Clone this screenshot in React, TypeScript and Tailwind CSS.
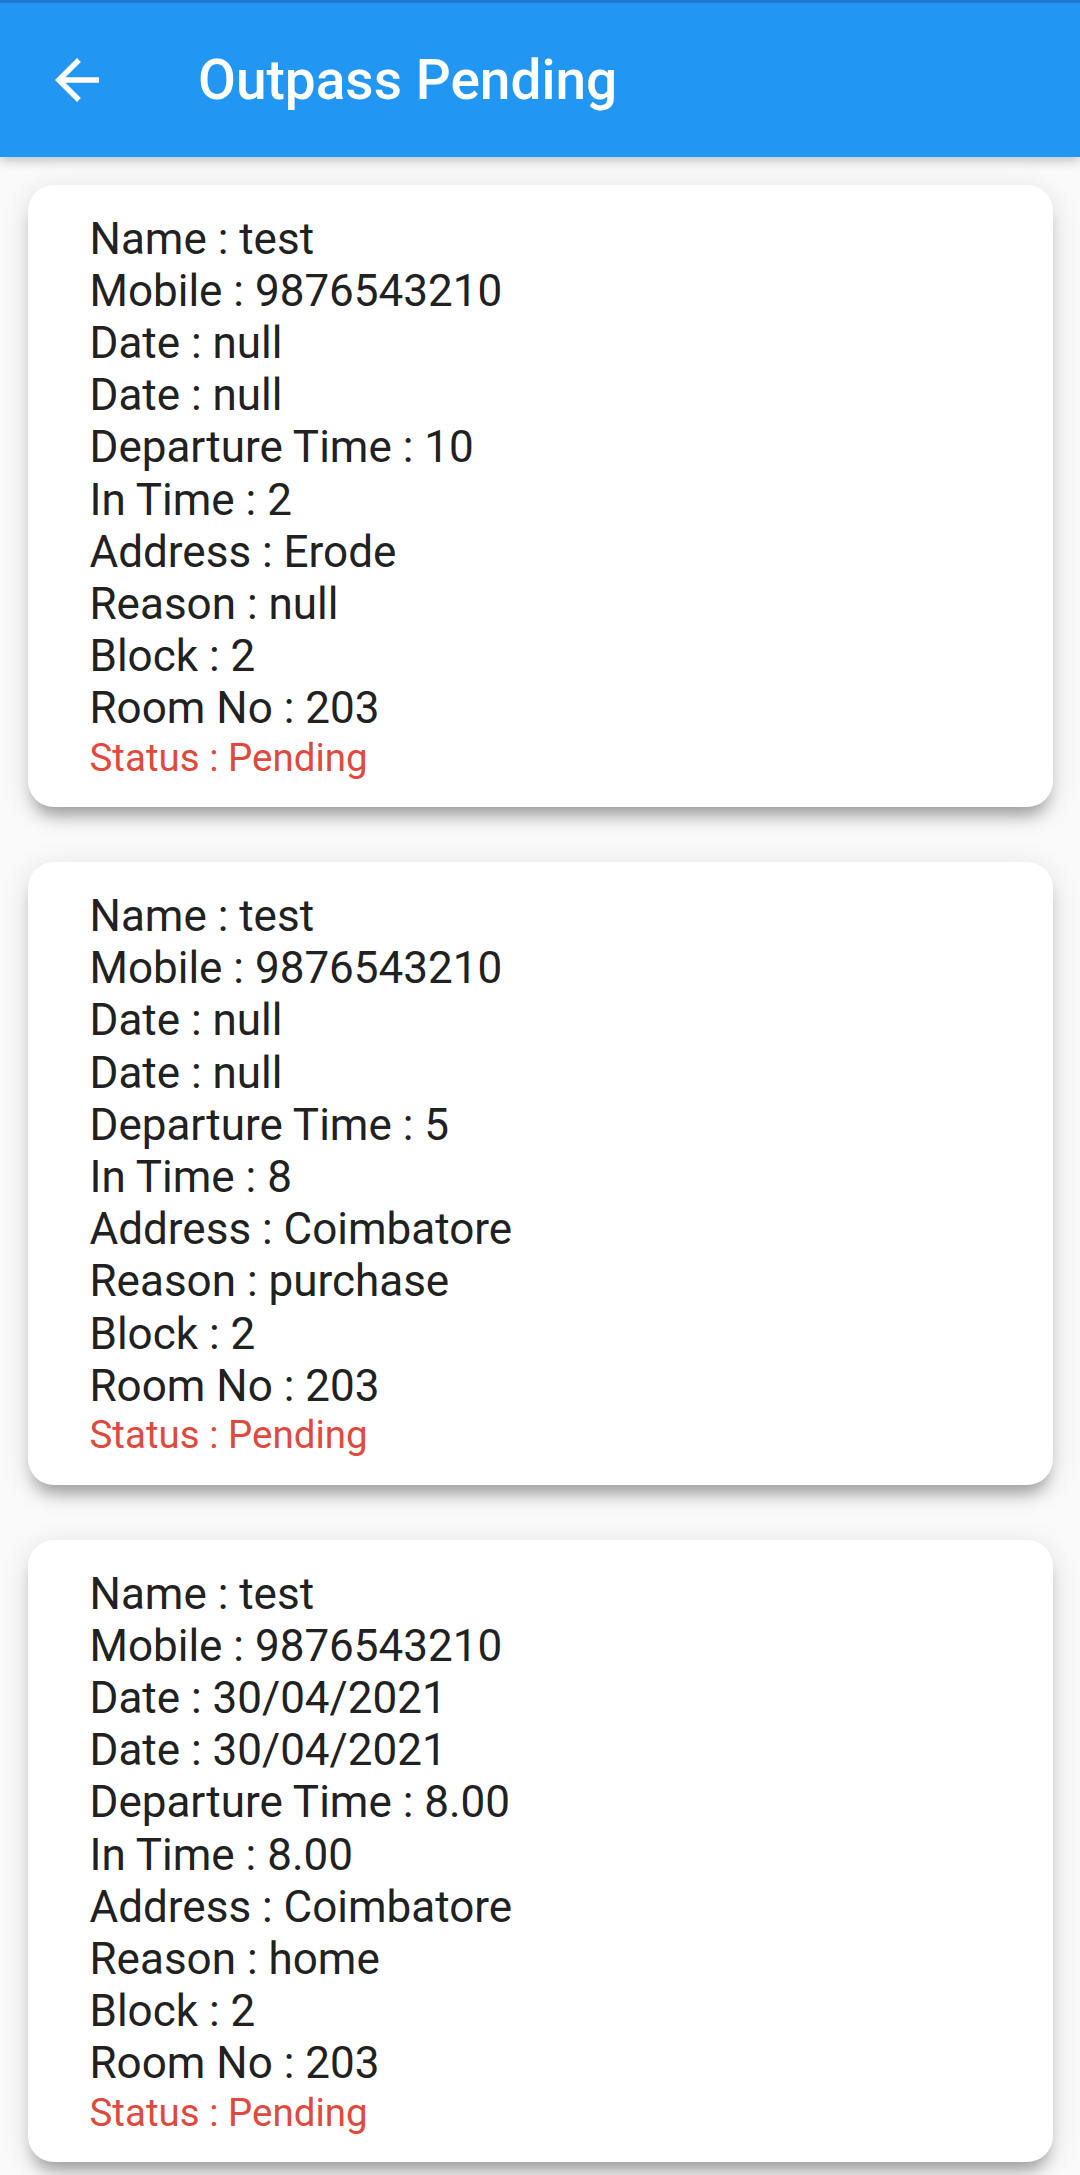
import React from 'react'

type Outpass = {
  name: string
  mobile: string
  date: string
  returnDate: string
  departure: string
  inTime: string
  address: string
  reason: string
  block: string
  room: string
  status: string
}

const outpasses: Outpass[] = [
  {
    name: 'test',
    mobile: '9876543210',
    date: 'null',
    returnDate: 'null',
    departure: '10',
    inTime: '2',
    address: 'Erode',
    reason: 'null',
    block: '2',
    room: '203',
    status: 'Pending',
  },
  {
    name: 'test',
    mobile: '9876543210',
    date: 'null',
    returnDate: 'null',
    departure: '5',
    inTime: '8',
    address: 'Coimbatore',
    reason: 'purchase',
    block: '2',
    room: '203',
    status: 'Pending',
  },
  {
    name: 'test',
    mobile: '9876543210',
    date: '30/04/2021',
    returnDate: '30/04/2021',
    departure: '8.00',
    inTime: '8.00',
    address: 'Coimbatore',
    reason: 'home',
    block: '2',
    room: '203',
    status: 'Pending',
  },
]

const BackArrow = (): JSX.Element => (
  <svg viewBox="0 0 24 24" className="w-[66px] h-[66px]" fill="#ffffff">
    <path d="M20 11H7.83l5.59-5.59L12 4l-8 8 8 8 1.41-1.41L7.83 13H20v-2z" />
  </svg>
)

const OutpassCard = ({ item }: { item: Outpass }): JSX.Element => {
  const rows = [
    `Name : ${item.name}`,
    `Mobile : ${item.mobile}`,
    `Date : ${item.date}`,
    `Date : ${item.returnDate}`,
    `Departure Time : ${item.departure}`,
    `In Time : ${item.inTime}`,
    `Address : ${item.address}`,
    `Reason : ${item.reason}`,
    `Block : ${item.block}`,
    `Room No : ${item.room}`,
  ]
  return (
    <div className="bg-white rounded-[26px] pl-[62px] pr-6 pt-[28px] pb-[27.5px] shadow-[0_14px_16px_-6px_rgba(0,0,0,0.32),0_6px_28px_2px_rgba(0,0,0,0.1)]">
      {rows.map((row, i) => (
        <div key={i} className="text-[44px] leading-[52.2px] text-[#212121]">
          {row}
        </div>
      ))}
      <div className="text-[38.5px] leading-[45px] text-[#DE4A3E]">Status : {item.status}</div>
    </div>
  )
}

export default function App(): JSX.Element {
  return (
    <div
      className="w-[1080px] h-[2175px] overflow-hidden bg-[#FAFAFA]"
      style={{ fontFamily: 'Roboto, "Noto Sans", sans-serif' }}
    >
      <div className="relative z-10 bg-[#2196F3] shadow-[0_4px_10px_rgba(0,0,0,0.22)]">
        <div className="h-[3px] bg-[#1C78D0]" />
        <div className="h-[154px] flex items-center">
          <div className="w-[154px] flex justify-center">
            <BackArrow />
          </div>
          <div className="ml-[44px] text-[55px] font-medium text-white leading-none">Outpass Pending</div>
        </div>
      </div>
      <div className="flex flex-col gap-[55px] p-[27.5px]">
        {outpasses.map((item, i) => (
          <OutpassCard key={i} item={item} />
        ))}
      </div>
    </div>
  )
}
